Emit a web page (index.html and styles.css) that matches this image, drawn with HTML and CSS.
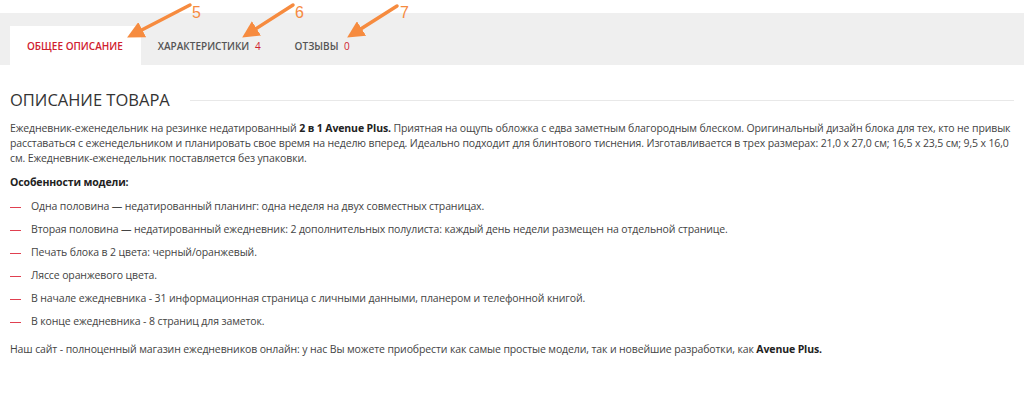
FILE: index.html
```html
<!DOCTYPE html>
<html lang="ru">
<head>
  <meta charset="UTF-8">
  <title>Описание товара</title>
  <link rel="stylesheet" href="styles.css">
</head>
<body>
  <div class="tabs">
    <div class="tab active">Общее описание</div>
    <div class="tab">Характеристики <span class="count">4</span></div>
    <div class="tab">Отзывы <span class="count">0</span></div>
  </div>

  <div class="content">
    <h2 class="title">Описание товара</h2>
    <p>Ежедневник-еженедельник на резинке недатированный <b>2 в 1 Avenue Plus.</b> Приятная на ощупь обложка с едва заметным благородным блеском. Оригинальный дизайн блока для тех, кто не привык расставаться с еженедельником и планировать свое время на неделю вперед. Идеально подходит для блинтового тиснения. Изготавливается в трех размерах: 21,0 х 27,0 см; 16,5 х 23,5 см; 9,5 х 16,0 см. Ежедневник-еженедельник поставляется без упаковки.</p>
    <p><b>Особенности модели:</b></p>
    <ul class="features">
      <li>Одна половина — недатированный планинг: одна неделя на двух совместных страницах.</li>
      <li>Вторая половина — недатированный ежедневник: 2 дополнительных полулиста: каждый день недели размещен на отдельной странице.</li>
      <li>Печать блока в 2 цвета: черный/оранжевый.</li>
      <li>Ляссе оранжевого цвета.</li>
      <li>В начале ежедневника - 31 информационная страница с личными данными, планером и телефонной книгой.</li>
      <li>В конце ежедневника - 8 страниц для заметок.</li>
    </ul>
    <p>Наш сайт - полноценный магазин ежедневников онлайн: у нас Вы можете приобрести как самые простые модели, так и новейшие разработки, как <b>Avenue Plus.</b></p>
  </div>

  <!-- annotation arrows over the tabs -->
  <svg class="marks" width="1024" height="60" viewBox="0 0 1024 60">
    <defs>
      <marker id="head" markerUnits="userSpaceOnUse" viewBox="0 0 17 17" refX="0" refY="8.5" markerWidth="17" markerHeight="17" orient="auto">
        <path d="M0,0 L17,8.5 L0,17 z" fill="#f68b3f"/>
      </marker>
    </defs>
    <g stroke="#f68b3f" stroke-width="3.5" stroke-linecap="round" fill="none">
      <line x1="190" y1="5" x2="142.2" y2="29.7" marker-end="url(#head)"/>
      <line x1="293" y1="5" x2="256.5" y2="28.4" marker-end="url(#head)"/>
      <line x1="397" y1="6" x2="361.5" y2="28.5" marker-end="url(#head)"/>
    </g>
    <g fill="#f68b3f" font-family="Liberation Sans, sans-serif" font-size="16">
      <text x="192" y="18">5</text>
      <text x="295" y="18">6</text>
      <text x="400" y="18">7</text>
    </g>
  </svg>
</body>
</html>
```

FILE: styles.css
```css
html {
  box-sizing: border-box;
}

*, *:before, *:after {
  box-sizing: inherit;
}

body {
  margin: 0;
  background: #fff;
  font-family: "Open Sans", sans-serif;
  font-size: 10.5px;
  letter-spacing: -0.12px;
  line-height: 15px;
  color: #444;
  position: relative;
}

.tabs {
  margin-top: 13px;
  height: 52px;
  background: #efefef;
  padding-left: 10px;
  display: flex;
  align-items: flex-end;
}

.tab {
  height: 39px;
  line-height: 40px;
  padding: 0 17px;
  font-size: 10px;
  letter-spacing: 0;
  font-weight: 600;
  text-transform: uppercase;
  color: #555;
}

.tab.active {
  background: #fff;
  color: #d0202e;
  padding-right: 18px;
}

.count {
  color: #d0202e;
  font-weight: 400;
  margin-left: 3px;
}

.content {
  padding: 0 10px;
}

.title {
  display: flex;
  align-items: center;
  gap: 20px;
  margin: 25px 0 11px;
  font-size: 16.5px;
  line-height: 20px;
  letter-spacing: 0;
  font-weight: 400;
  text-transform: uppercase;
  color: #333;
}

.title:after {
  content: "";
  flex: 1;
  height: 1px;
  background: #e8e8e8;
}

p {
  margin: 0 0 9px;
}

b {
  color: #222;
}

.features {
  list-style: none;
  margin: 0 0 13px;
  padding: 0;
}

.features li {
  display: flex;
}

.features li + li {
  margin-top: 8px;
}

.features li:before {
  content: "";
  flex: none;
  width: 11px;
  height: 1px;
  margin: 8px 10px 0 0;
  background: #e04050;
}

.marks {
  position: absolute;
  top: 0;
  left: 0;
}
```
